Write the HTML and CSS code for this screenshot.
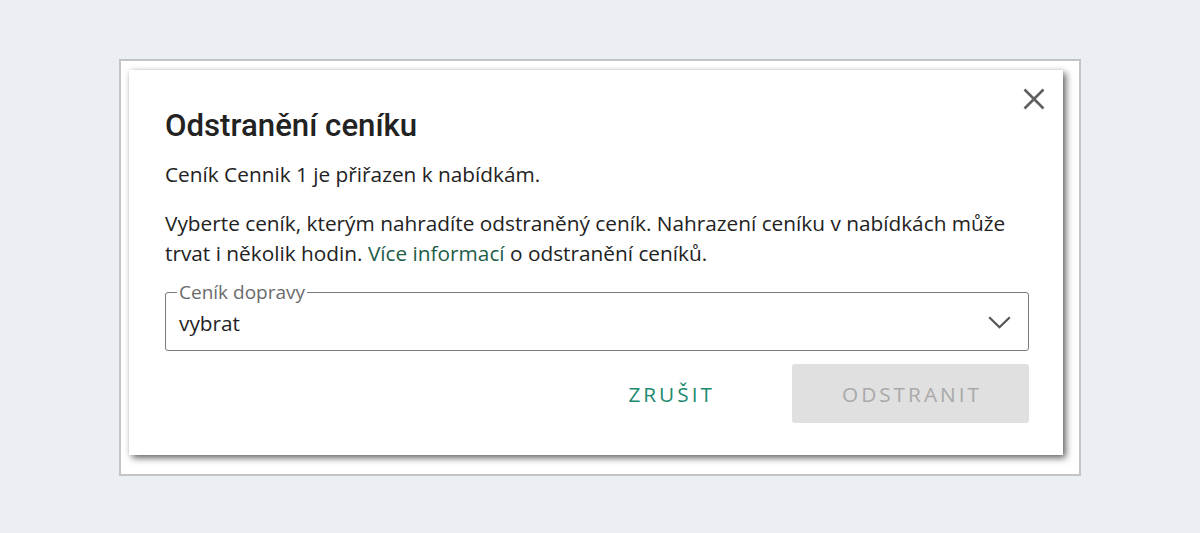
FILE: index.html
```html
<!DOCTYPE html>
<html lang="cs">
<head>
<meta charset="utf-8">
<title>Odstranění ceníku</title>
<link rel="stylesheet" href="styles.css">
</head>
<body>
<div class="stage">
  <div class="frame">
    <div class="dialog">
      <button class="close" aria-label="Zavřít">
        <svg width="22" height="22" viewBox="0 0 22 22"><path d="M1.5 1.5L20.5 20.5M20.5 1.5L1.5 20.5" stroke="#5f5f5f" stroke-width="2.6" fill="none"/></svg>
      </button>
      <h1 class="title">Odstranění ceníku</h1>
      <p class="text first">Ceník Cennik 1 je přiřazen k nabídkám.</p>
      <p class="text second">Vyberte ceník, kterým nahradíte odstraněný ceník. Nahrazení ceníku v nabídkách může trvat i několik hodin. <a class="link" href="#">Více informací</a> o odstranění ceníků.</p>
      <div class="field">
        <span class="field-label">Ceník dopravy</span>
        <span class="field-value">vybrat</span>
        <svg class="chevron" width="23" height="13" viewBox="0 0 23 13"><path d="M1.2 1.2L11.5 11.3L21.8 1.2" stroke="#555" stroke-width="2.2" fill="none"/></svg>
      </div>
      <div class="actions">
        <button class="btn btn-text">ZRUŠIT</button>
        <button class="btn btn-disabled">ODSTRANIT</button>
      </div>
    </div>
  </div>
</div>
</body>
</html>
```
FILE: styles.css
```css
html, body {
  margin: 0;
  padding: 0;
}
body {
  background: #ebeef2;
  font-family: "Open Sans", "Liberation Sans", sans-serif;
  color: #222222;
}
.stage {
  display: flex;
  justify-content: center;
  padding-top: 59px;
}
.frame {
  width: 934px;
  border: 2px solid #c4c4c4;
  background: #ffffff;
  padding: 9px 16px 19px 8px;
}
.dialog {
  position: relative;
  background: #ffffff;
  padding: 38px 34px 32px 36px;
  box-shadow: 3px 3px 7px rgba(0, 0, 0, 0.6), 0 0 3px rgba(0, 0, 0, 0.08);
}
.close {
  position: absolute;
  top: 18px;
  right: 18px;
  width: 22px;
  height: 22px;
  padding: 0;
  border: 0;
  background: none;
  display: flex;
}
.title {
  margin: 0;
  font-family: Roboto, "Liberation Sans", sans-serif;
  font-weight: 500;
  font-size: 31.2px;
  line-height: 36px;
  color: #222222;
}
.text {
  margin: 0;
  font-size: 20.8px;
  line-height: 30px;
}
.first {
  margin-top: 15px;
}
.second {
  margin-top: 19px;
}
.link {
  color: #1d5d49;
  text-decoration: none;
}
.field {
  position: relative;
  margin-top: 24px;
  height: 57px;
  border: 1px solid #7a7a7a;
  border-radius: 3px;
  display: flex;
  align-items: center;
  justify-content: space-between;
  padding: 0 17px 0 13px;
}
.field-label {
  position: absolute;
  top: -15px;
  left: 11px;
  padding: 0 2px;
  background: #ffffff;
  font-size: 19px;
  line-height: 28px;
  color: #6b6b6b;
}
.field-value {
  font-size: 20.8px;
  line-height: 30px;
  color: #1f1f1f;
  padding-top: 2px;
}
.chevron {
  margin-top: 2px;
}
.actions {
  margin-top: 13px;
  display: flex;
  justify-content: flex-end;
  gap: 30px;
}
.btn {
  height: 59px;
  padding: 0 47px 0 50px;
  border: 0;
  border-radius: 3px;
  font-family: "Open Sans", "Liberation Sans", sans-serif;
  font-size: 20.8px;
  letter-spacing: 3px;
  background: none;
}
.btn-text {
  color: #1c8a6f;
}
.btn-disabled {
  background: #e0e0e0;
  color: #a9a9a9;
}
```
